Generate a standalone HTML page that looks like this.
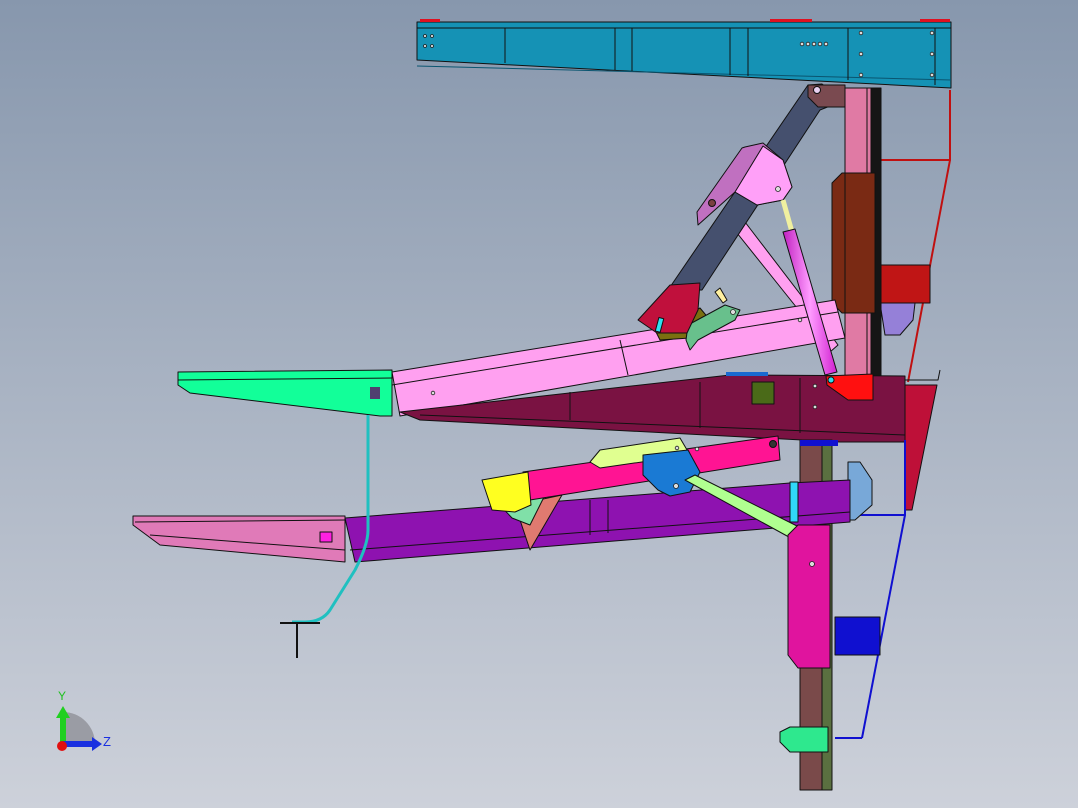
<!DOCTYPE html>
<html><head><meta charset="utf-8"><style>
html,body{margin:0;padding:0;width:1078px;height:808px;overflow:hidden}
svg{display:block}
</style></head><body>
<svg width="1078" height="808" viewBox="0 0 1078 808" xmlns="http://www.w3.org/2000/svg">
<defs>
<linearGradient id="bg" x1="0" y1="0" x2="0" y2="1">
<stop offset="0" stop-color="#8797ad"/><stop offset="1" stop-color="#cdd1da"/>
</linearGradient>
<linearGradient id="cyl" x1="0" y1="0" x2="1" y2="0">
<stop offset="0" stop-color="#c020c0"/><stop offset="0.5" stop-color="#ff9cff"/><stop offset="1" stop-color="#d020d0"/>
</linearGradient>
</defs>
<rect width="1078" height="808" fill="url(#bg)"/>
<g stroke="#111" stroke-width="1" stroke-linejoin="round">
<polyline points="950,90 950,160 880,160" fill="none" stroke="#c01010" stroke-width="2"/>
<line x1="950" y1="160" x2="908" y2="382" stroke="#c01010" stroke-width="2"/>
<rect x="880" y="265" width="50" height="38" fill="#c01515"/>
<polygon points="880,303 915,303 913,320 900,335 885,335" fill="#9580d8"/>
<polygon points="417,22 951,22 951,88 417,60" fill="#1592b5"/>
<line x1="417" y1="28" x2="951" y2="28"/>
<line x1="417" y1="66" x2="951" y2="80" stroke="#0a5570"/>
<line x1="505" y1="28" x2="505" y2="63"/><line x1="615" y1="28" x2="615" y2="70"/><line x1="632" y1="28" x2="632" y2="71"/>
<line x1="730" y1="28" x2="730" y2="75"/><line x1="748" y1="28" x2="748" y2="76"/><line x1="848" y1="28" x2="848" y2="80"/><line x1="935" y1="28" x2="935" y2="85"/>
<rect x="770" y="19" width="42" height="3" fill="#e01020" stroke="none"/>
<rect x="920" y="19" width="30" height="3" fill="#e01020" stroke="none"/>
<rect x="420" y="19" width="20" height="3" fill="#e01020" stroke="none"/>
<!-- pink strut -->
<polygon points="733,228 745,222 820,320 838,345 830,352 805,318" fill="#ffa0f0"/>
<rect x="845" y="88" width="27" height="348" fill="#e07aa4"/>
<rect x="871" y="88" width="10" height="348" fill="#151515"/>
<line x1="867" y1="88" x2="867" y2="436"/>
<polygon points="832,183 842,173 875,173 875,313 842,313 832,303" fill="#7a2a14"/>
<line x1="845" y1="173" x2="845" y2="313"/>
<!-- navy beam -->
<polygon points="808,85 822,84 845,100 820,110 702,290 668,290" fill="#45506e"/>
<polygon points="808,85 845,85 845,107 818,107 808,97" fill="#7a4a50"/>
<circle cx="817" cy="90" r="3.5" fill="#e8d0f0"/>
<!-- pink head -->
<polygon points="745,147 763,143 783,160 792,187 783,200 757,205 735,192 698,225 697,212 742,148" fill="#c070c0"/>
<polygon points="763,146 783,160 792,187 783,200 757,205 735,192" fill="#ffa0f8"/>
<circle cx="712" cy="203" r="3.5" fill="#7a4040"/>
<polygon points="392,372 835,300 845,338 400,416" fill="#ffa0f0"/>
<line x1="392" y1="385" x2="838" y2="312"/><line x1="620" y1="340" x2="628" y2="375"/>
<polygon points="655,330 700,308 710,320 690,338 660,340" fill="#7a7010"/>
<polygon points="688,325 725,305 740,310 735,320 698,340 690,350 686,340" fill="#68c08c"/>
<polygon points="715,292 720,288 727,300 723,303" fill="#fff0a0"/>
<!-- red bracket -->
<polygon points="638,320 670,285 700,283 698,310 687,333 657,333" fill="#c0103c"/>
<rect x="657" y="318" width="5" height="14" fill="#30e0f0" transform="rotate(15 660 325)"/>
<line x1="783" y1="200" x2="792" y2="232" stroke="#f0f0a0" stroke-width="5"/>
<polygon points="783,232 795,229 837,372 825,375" fill="url(#cyl)"/>
<polygon points="178,372 392,370 392,416 380,416 190,393 178,385" fill="#12ff99"/>
<line x1="178" y1="380" x2="392" y2="378"/>
<rect x="370" y="387" width="10" height="12" fill="#504070" stroke="none"/>
<polygon points="400,412 730,375 905,376 905,442 840,442 420,420" fill="#7a1242"/>
<line x1="420" y1="415" x2="905" y2="435"/>
<line x1="570" y1="392" x2="570" y2="420"/><line x1="700" y1="382" x2="700" y2="428"/><line x1="800" y1="378" x2="800" y2="433"/>
<rect x="752" y="382" width="22" height="22" fill="#4a6a18"/>
<rect x="726" y="372" width="42" height="4" fill="#1a6ad0" stroke="none"/>
<polygon points="826,376 873,374 873,400 848,400 827,385" fill="#ff1010"/>
<circle cx="831" cy="380" r="3" fill="#30e0f0"/>
<polygon points="905,385 937,385 912,510 905,510" fill="#be1038"/>
<polyline points="905,380 938,380 940,370" fill="none"/>
<polyline points="905,440 905,515 850,515" fill="none" stroke="#1010d0" stroke-width="2"/>
<line x1="905" y1="515" x2="862" y2="738" stroke="#1010d0" stroke-width="2"/>
<line x1="835" y1="738" x2="862" y2="738" stroke="#1010d0" stroke-width="2"/>
<rect x="800" y="440" width="22" height="350" fill="#7a4a4a"/>
<rect x="822" y="440" width="10" height="350" fill="#5a7040"/>
<rect x="800" y="440" width="38" height="6" fill="#1010d0" stroke="none"/>
<polygon points="848,462 860,462 872,480 872,505 855,520 848,520" fill="#78a8d8"/>
<polygon points="345,518 790,483 850,480 850,522 355,562" fill="#8e12b0"/>
<line x1="350" y1="550" x2="850" y2="512"/>
<line x1="590" y1="500" x2="590" y2="535"/><line x1="608" y1="500" x2="608" y2="533"/>
<rect x="790" y="482" width="8" height="40" fill="#30d8f8"/>
<polygon points="133,516 345,516 345,562 160,545 133,525" fill="#e07ab8"/>
<line x1="135" y1="522" x2="345" y2="520"/><line x1="150" y1="535" x2="345" y2="550"/>
<rect x="320" y="532" width="12" height="10" fill="#ff20e0"/>
<polygon points="515,505 562,495 530,550" fill="#e07a70"/>
<polygon points="495,500 545,495 530,525 512,518" fill="#80e0a8"/>
<polygon points="523,472 778,436 780,460 530,500" fill="#ff1493"/>
<polygon points="590,462 600,450 680,438 690,455 600,468" fill="#e0ff90"/>
<polygon points="482,480 528,472 531,505 515,512 492,510" fill="#ffff20"/>
<polygon points="643,455 688,450 700,472 690,492 670,496 658,490 643,475" fill="#1a7ad4"/>
<polygon points="685,480 695,475 805,530 798,542" fill="#b0ff90"/>
<circle cx="773" cy="444" r="3.5" fill="#333"/>
<polygon points="788,535 798,525 830,525 830,668 798,668 788,655" fill="#e0149e"/>
<rect x="835" y="617" width="45" height="38" fill="#1010d0"/>
<polygon points="780,732 790,727 828,727 828,752 790,752 780,742" fill="#2ee88e"/>
<path d="M368,415 L368,530 Q368,545 355,570 L330,610 Q322,622 305,622 L292,622" fill="none" stroke="#20c0c0" stroke-width="3"/>
<line x1="280" y1="623" x2="320" y2="623" stroke-width="2"/>
<line x1="297" y1="623" x2="297" y2="658" stroke-width="2"/>
</g>
<g fill="#ddd" stroke="#222" stroke-width="0.8">
<circle cx="802" cy="44" r="1.8"/><circle cx="808" cy="44" r="1.8"/><circle cx="814" cy="44" r="1.8"/><circle cx="820" cy="44" r="1.8"/><circle cx="826" cy="44" r="1.8"/>
<circle cx="861" cy="33" r="1.8"/><circle cx="861" cy="54" r="1.8"/><circle cx="861" cy="75" r="1.8"/>
<circle cx="932" cy="33" r="1.8"/><circle cx="932" cy="54" r="1.8"/><circle cx="932" cy="75" r="1.8"/>
<circle cx="425" cy="36" r="1.5"/><circle cx="432" cy="36" r="1.5"/><circle cx="425" cy="46" r="1.5"/><circle cx="432" cy="46" r="1.5"/>
<circle cx="778" cy="189" r="2.5"/><circle cx="733" cy="312" r="2.5"/><circle cx="800" cy="320" r="1.8"/>
<circle cx="815" cy="407" r="1.8"/><circle cx="815" cy="386" r="1.8"/><circle cx="433" cy="393" r="1.8"/>
<circle cx="812" cy="564" r="2.5"/><circle cx="676" cy="486" r="2.5"/><circle cx="697" cy="449" r="1.8"/><circle cx="677" cy="448" r="1.8"/>
</g>
<path d="M63,712 A32,32 0 0 1 95,744 L63,744 Z" fill="#9a9ca4"/>
<rect x="60" y="716" width="6" height="28" fill="#20d020"/>
<polygon points="56,718 63,706 70,718" fill="#20d020"/>
<rect x="63" y="741" width="30" height="6" fill="#1a30e0"/>
<polygon points="92,737 102,744 92,751" fill="#1a30e0"/>
<circle cx="62" cy="746" r="5" fill="#e01010"/>
<text x="58" y="700" font-family="Liberation Sans, sans-serif" font-size="12" fill="#20c020">Y</text>
<text x="103" y="746" font-family="Liberation Sans, sans-serif" font-size="13" fill="#1a30e0">Z</text>
</svg>
</body></html>
